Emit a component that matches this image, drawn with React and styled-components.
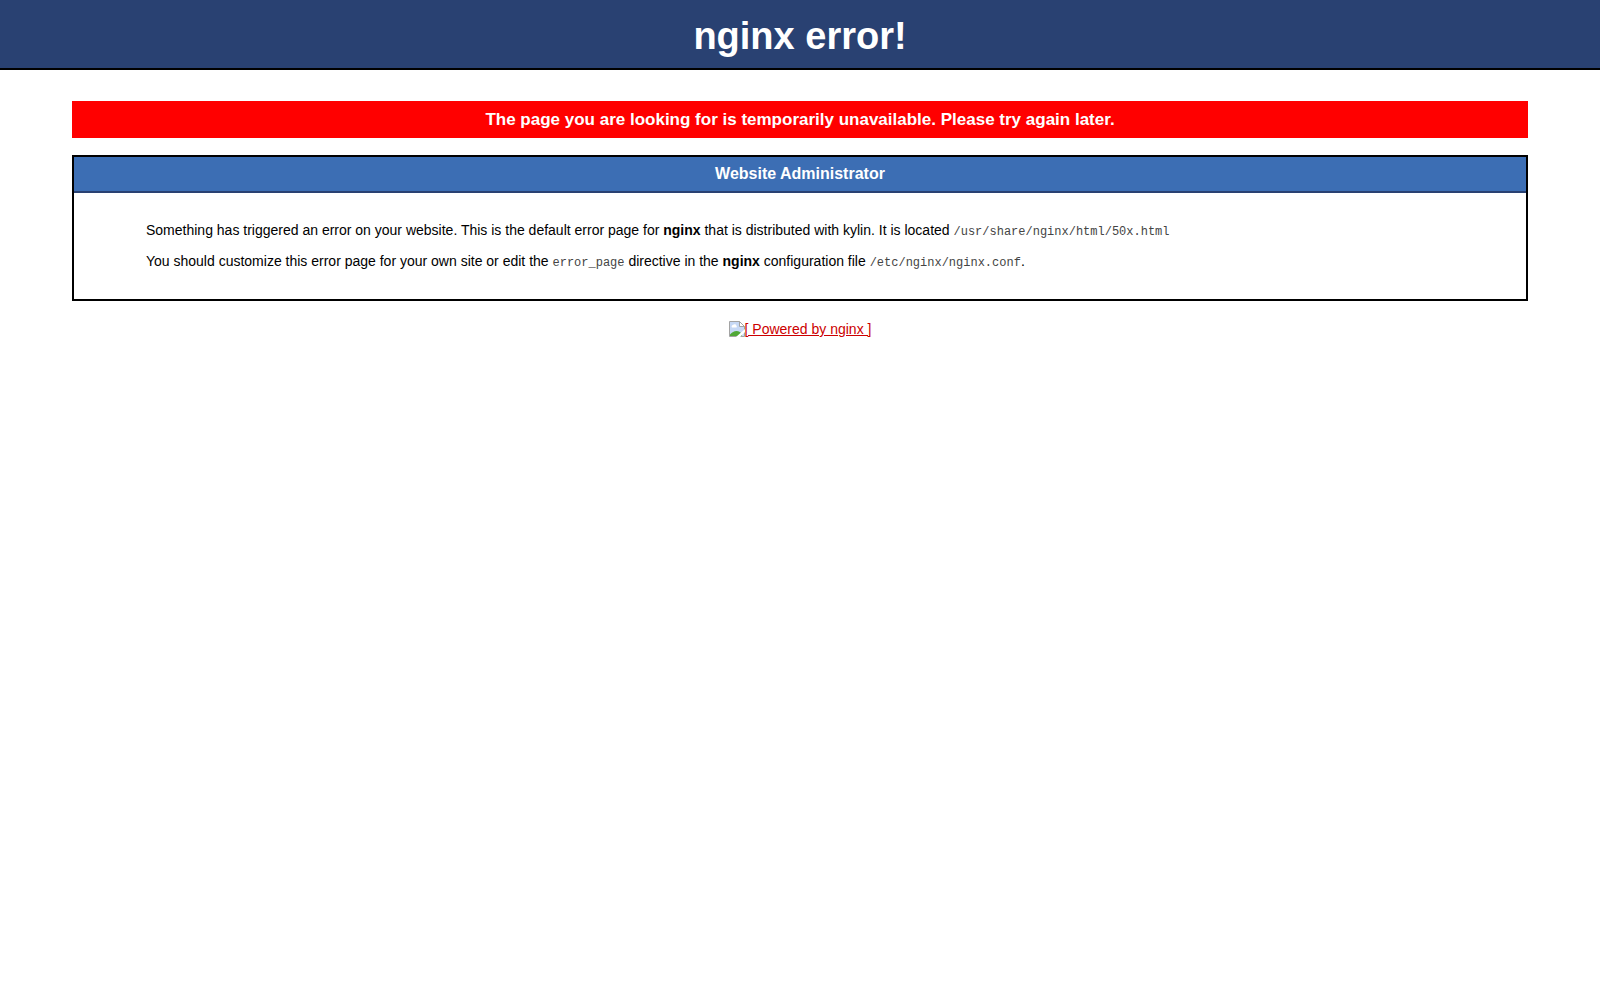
import React from 'react'
import styled, {createGlobalStyle} from 'styled-components'


const GlobalStyle = createGlobalStyle`
    body {
        margin: 0;
        background-color: #fff;
        color: #000;
        font-family: "Liberation Sans", sans-serif;
        font-size: 14px;
        line-height: 16px;
    }
`

const Title = styled.h1`
    margin: 0;
    padding: 15px 50px 10px;
    background-color: #294172;
    border-bottom: 2px solid #000;
    color: #fff;
    font-size: 38px;
    line-height: 43px;
    text-align: center;
`

const Content = styled.main`
    padding: 31px 72px;
`

const Notice = styled.h3`
    margin: 0 0 17px;
    padding: 9px;
    background-color: #f00;
    color: #fff;
    font-size: 17px;
    line-height: 19px;
    text-align: center;
`

const Alert = styled.section`
    border: 2px solid #000;
`

const AlertHeading = styled.h2`
    margin: 0;
    padding: 8px;
    background-color: #3c6eb4;
    border-bottom: 2px solid #294172;
    color: #fff;
    font-size: 16px;
    line-height: 18px;
    text-align: center;
`

const AlertBody = styled.div`
    padding: 14px 72px 15px;
`

const Paragraph = styled.p`
    margin: 15px 0;
`

const Code = styled.code`
    color: #444;
    font-family: "Liberation Mono", monospace;
    font-size: 12px;
    line-height: 1;
`

const Footer = styled.footer`
    display: flex;
    justify-content: center;
    margin-top: 20px;
`

const PoweredBy = styled.a`
    display: flex;
    color: #c00;
    text-decoration: underline;
`

const BrokenImage = () => (
    <svg width='16' height='16' viewBox='0 0 16 16' aria-hidden='true'>
        <path d='M.5 .5h10l5 5v10H.5z' fill='#c6d8f5' stroke='#a3a3a3' />
        <path d='M10.5 .5v5h5z' fill='#fff' stroke='#a3a3a3' />
        <path d='M3 6.5a1.5 1.5 0 0 1 1-2.5 2 2 0 0 1 3.5 1A1 1 0 0 1 7.5 6.5z' fill='#fff' />
        <path d='M1 15v-1.5C3 11.5 5 10 7.5 10s4.5 1.5 5.5 3v2z' fill='#50a837' />
        <path d='M7 16l9-8v3l-5 5z' fill='#fff' />
    </svg>
)


export default function App() {
    return (
        <>
            <GlobalStyle />
            <Title>nginx error!</Title>
            <Content>
                <Notice>The page you are looking for is temporarily unavailable. Please try again later.</Notice>
                <Alert>
                    <AlertHeading>Website Administrator</AlertHeading>
                    <AlertBody>
                        <Paragraph>
                            Something has triggered an error on your website. This is the default error page
                            for <strong>nginx</strong> that is distributed with kylin. It is
                            located <Code>/usr/share/nginx/html/50x.html</Code>
                        </Paragraph>
                        <Paragraph>
                            You should customize this error page for your own site or edit
                            the <Code>error_page</Code> directive in the <strong>nginx</strong> configuration
                            file <Code>/etc/nginx/nginx.conf</Code>.
                        </Paragraph>
                    </AlertBody>
                </Alert>
                <Footer>
                    <PoweredBy href='#'>
                        <BrokenImage />
                        <span>[ Powered by nginx ]</span>
                    </PoweredBy>
                </Footer>
            </Content>
        </>
    )
}
